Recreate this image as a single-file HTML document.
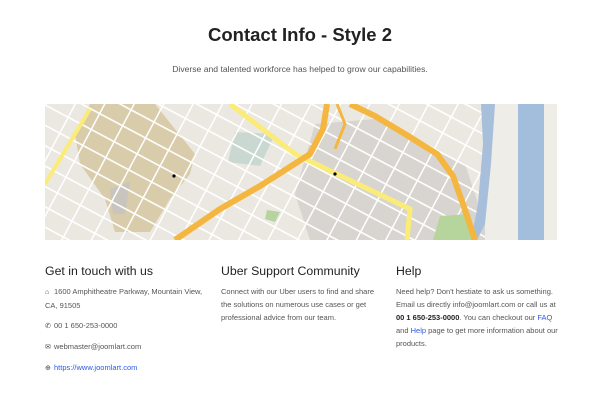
<!DOCTYPE html>
<html><head><style>
body{margin:0;width:600px;height:402px;background:#fff;font-family:"Liberation Sans",sans-serif;color:#333;position:relative;overflow:hidden}
h1{position:absolute;top:24px;left:0;width:600px;text-align:center;margin:0;font-size:18.5px;font-weight:bold;color:#222}
.sub{position:absolute;top:64px;left:0;width:600px;text-align:center;font-size:8.6px;color:#555}
.map{position:absolute;left:45px;top:104px;width:512px;height:136px}
.col{position:absolute;top:264px;font-size:7.5px;color:#555;line-height:13px}
.col h3{margin:0 0 6px;font-size:12.3px;font-weight:normal;color:#222;line-height:15px}
.col p{margin:0 0 7px}
a{color:#2c5ae8;text-decoration:none}
.i{display:inline-block;width:9px;color:#444;font-size:7px}
b{color:#222}
</style></head><body>
<h1>Contact Info - Style 2</h1>
<div class="sub">Diverse and talented workforce has helped to grow our capabilities.</div>
<svg class="map" viewBox="0 0 512 136" width="512" height="136">
<defs>
<pattern id="st" width="26" height="18" patternUnits="userSpaceOnUse" patternTransform="rotate(28)">
<rect x="0" y="0" width="26" height="1.6" fill="#fff"/>
<rect x="0" y="0" width="1.5" height="18" fill="#fff"/>
</pattern>
</defs>
<rect width="512" height="136" fill="#ebe8e2"/>
<polygon points="270,20 330,15 380,40 420,60 440,120 440,136 265,136 250,90" fill="#d8d5d0"/>
<polygon points="45,0 110,0 150,50 145,70 125,95 105,128 70,128 60,95 35,60 30,30" fill="#d9ccaa"/>
<polygon points="48,55 75,45 70,80 50,80" fill="#d9ccaa"/>
<polygon points="65,85 85,78 80,110 68,110" fill="#c8c4be"/>
<polygon points="190,28 230,30 215,62 183,58" fill="#c9d8d0"/>
<rect width="440" height="136" fill="url(#st)"/>
<polygon points="222,106 235,108 230,118 220,115" fill="#b7d3a0"/>
<polygon points="395,112 425,110 432,136 388,136" fill="#b5d59c"/>
<rect x="440" y="0" width="72" height="136" fill="#efede8"/>
<polygon points="436,0 450,0 446,60 440,120 432,136 426,136 433,100 438,40" fill="#a7bfdb"/>
<rect x="473" y="0" width="26" height="136" fill="#a3bedd"/>
<polyline points="45,5 0,80" stroke="#fbec78" stroke-width="4" fill="none"/>
<polyline points="185,0 250,50 365,105 362,136" stroke="#fbec78" stroke-width="5" fill="none"/>
<polyline points="130,136 175,105 215,82 265,50 278,25 282,0" stroke="#f5b640" stroke-width="6" fill="none"/>
<polyline points="305,0 330,12 360,30 392,50 408,72 418,100 430,136" stroke="#f5b640" stroke-width="6" fill="none"/>
<polyline points="292,0 300,20 290,45" stroke="#f5b640" stroke-width="3" fill="none"/>
<circle cx="129" cy="72" r="1.6" fill="#000"/><circle cx="290" cy="70" r="1.6" fill="#000"/>
</svg>
<div class="col" style="left:45px;width:165px">
<h3>Get in touch with us</h3>
<p><span class="i">&#8962;</span>1600 Amphitheatre Parkway, Mountain View, CA, 91505</p>
<p><span class="i">&#9990;</span>00 1 650-253-0000</p>
<p><span class="i">&#9993;</span>webmaster@joomlart.com</p>
<p><span class="i">&#8853;</span><a>https://www.joomlart.com</a></p>
</div>
<div class="col" style="left:221px;width:162px">
<h3>Uber Support Community</h3>
<p>Connect with our Uber users to find and share the solutions on numerous use cases or get professional advice from our team.</p>
</div>
<div class="col" style="left:396px;width:168px">
<h3>Help</h3>
<p>Need help? Don't hestiate to ask us something. Email us directly info@joomlart.com or call us at <b>00 1 650-253-0000</b>. You can checkout our <a>FAQ</a> and <a>Help</a> page to get more information about our products.</p>
</div>
</body></html>
